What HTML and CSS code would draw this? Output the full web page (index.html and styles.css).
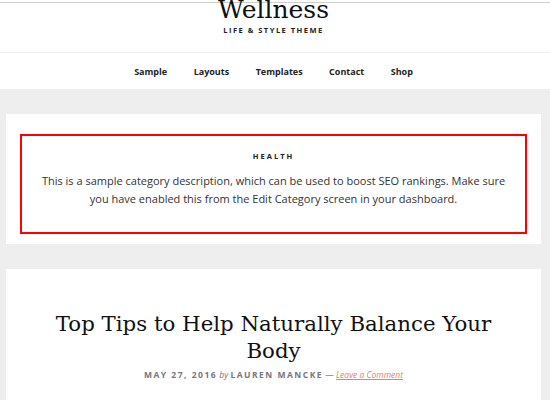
FILE: index.html
```
<!DOCTYPE html>
<html lang="en">
<head>
<meta charset="utf-8">
<title>Wellness</title>
<link rel="stylesheet" href="styles.css">
</head>
<body>
<header class="site-header">
  <div class="title-area">
    <p class="site-title">Wellness</p>
    <p class="site-description">Life &amp; Style Theme</p>
  </div>
</header>
<nav class="nav-primary">
  <ul class="menu">
    <li><a href="#">Sample</a></li>
    <li><a href="#">Layouts</a></li>
    <li><a href="#">Templates</a></li>
    <li><a href="#">Contact</a></li>
    <li><a href="#">Shop</a></li>
  </ul>
</nav>
<div class="site-inner">
  <section class="archive-box">
    <div class="archive-description">
      <h1 class="archive-title">Health</h1>
      <p class="archive-text">This is a sample category description, which can be used to boost SEO rankings. Make sure you have enabled this from the Edit Category screen in your dashboard.</p>
    </div>
  </section>
  <article class="entry">
    <h2 class="entry-title">Top Tips to Help Naturally Balance Your Body</h2>
    <p class="entry-meta"><span class="entry-time">May 27, 2016</span> <span class="by">by</span> <span class="author">Lauren Mancke</span> <span class="dash">—</span> <a class="comments" href="#">Leave a Comment</a></p>
  </article>
</div>
</body>
</html>
```
FILE: styles.css
```
html, body {
  margin: 0;
  padding: 0;
  background: #ffffff;
  height: 100%;
  overflow: hidden;
}
body {
  padding-top: 2px;
  font-family: "Open Sans", "Liberation Sans", sans-serif;
  color: #333;
}
.site-header {
  border-top: 1px solid #cfcfcf;
  border-bottom: 1px solid #f0f0f0;
  height: 49px;
  display: flex;
  justify-content: center;
  padding-right: 3px;
}
.title-area {
  text-align: center;
}
.site-title {
  margin: -8px 0 0;
  font-family: "DejaVu Serif", serif;
  font-size: 25px;
  line-height: 30px;
  color: #111;
}
.site-description {
  margin: 0;
  font-size: 7.5px;
  line-height: 10px;
  font-weight: 700;
  letter-spacing: 1.5px;
  text-transform: uppercase;
  color: #222;
}
.nav-primary {
  height: 32px;
  padding-bottom: 4px;
  padding-right: 3px;
  display: flex;
  align-items: center;
  justify-content: center;
}
.menu {
  list-style: none;
  margin: 0;
  padding: 0;
  display: flex;
  gap: 26.5px;
}
.menu a {
  font-size: 9px;
  font-weight: 700;
  color: #222;
  text-decoration: none;
}
.site-inner {
  background: #eeeeee;
  padding: 25px 9px 0 6px;
  height: 400px;
}
.archive-box {
  background: #fff;
  padding: 20px 14px 10px;
}
.archive-description {
  border: 2px solid #ff0000;
  padding: 14px 10px 24px;
  text-align: center;
}
.archive-title {
  margin: 0;
  font-size: 7.5px;
  line-height: 12px;
  font-weight: 700;
  letter-spacing: 2px;
  text-transform: uppercase;
  color: #222;
}
.archive-text {
  margin: 10px 0 0;
  font-size: 11px;
  line-height: 18px;
  color: #333;
}
.entry {
  background: #fff;
  margin-top: 25px;
  padding: 41px 40px 30px;
  text-align: center;
}
.entry-title {
  margin: 0;
  font-family: "DejaVu Serif", serif;
  font-weight: 400;
  font-size: 21.3px;
  line-height: 27px;
  color: #111;
}
.entry-meta {
  margin: 5px 0 0;
  font-size: 8.5px;
  line-height: 12px;
  color: #767680;
}
.entry-time, .author {
  font-weight: 700;
  letter-spacing: 1.5px;
  text-transform: uppercase;
}
.by {
  font-style: italic;
}
.comments {
  font-style: italic;
  color: #e8806e;
}
```
